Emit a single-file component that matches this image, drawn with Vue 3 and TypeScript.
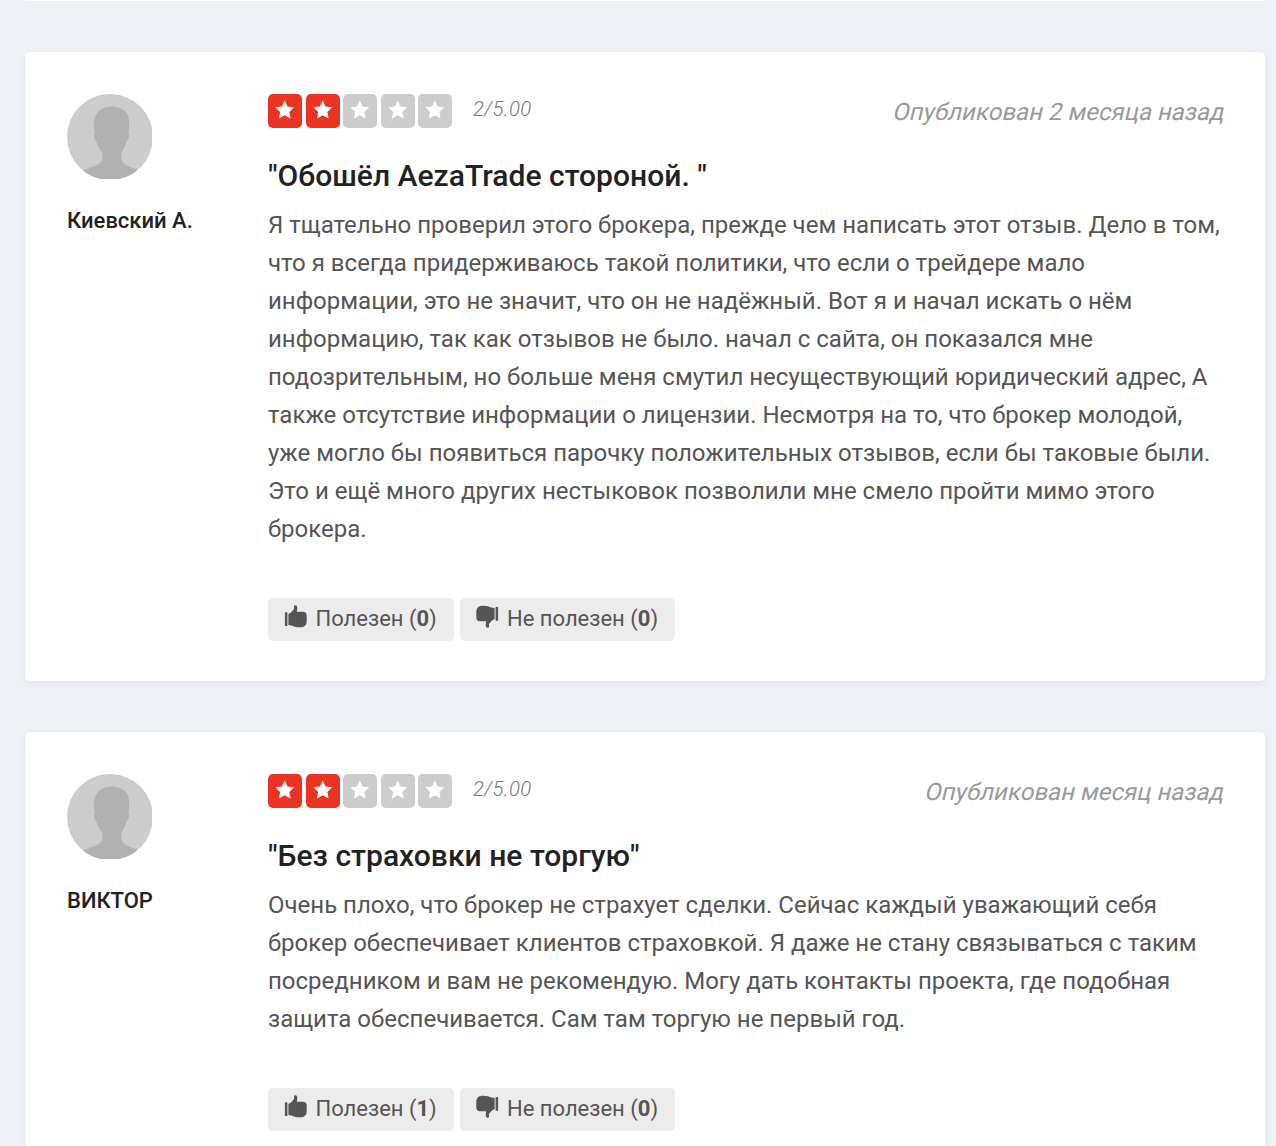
<template>
  <main class="reviews-page">
    <div class="review-card previous"></div>

    <article v-for="review in reviews" :key="review.id" class="review-card">
      <aside class="author">
        <svg class="avatar" viewBox="0 0 85 85" aria-hidden="true">
          <rect width="85" height="85" fill="#cccccc" />
          <path
            fill="#b1b1b1"
            d="M10 80C16 76 22 74 29 71.500c6-2.500 7.500-6 6-13.500-3-3.500-4.700-7-5.500-10-2.200-1.500-3.200-6-1.700-8.500-1.500-7-1.500-14 1.500-19 3-5 8.500-8 15-8 3 0 5.500.500 7 1.500C58 15 61.500 20 62 26c.300 4 0 9-.700 12.500 1.500 3 .500 7-1.700 8.500-1 5-2.500 8-5.100 11.500-1 7 0 10 5.500 13C65 74 72 76 78 80v6H10z"
          />
        </svg>
        <strong class="author-name">{{ review.author }}</strong>
      </aside>

      <div class="review-body">
        <header class="review-header">
          <div class="stars">
            <span v-for="n in 5" :key="n" class="star" :class="{ filled: n <= review.rating }">
              <svg viewBox="0 0 20 20" aria-hidden="true">
                <path d="M10 .400l2.900 6.300 6.700.800-4.900 4.700 1.300 6.900L10 15.700l-6 3.400 1.300-6.900L.400 7.500l6.700-.800z" />
              </svg>
            </span>
          </div>
          <em class="rating">{{ review.rating }}/5.00</em>
          <span class="published">{{ review.published }}</span>
        </header>

        <h4 class="review-title">"{{ review.title }}"</h4>
        <p class="review-text">
          <span v-for="line in review.lines" :key="line">{{ line }}</span>
        </p>

        <div class="votes">
          <button class="vote useful" @click="review.useful++">
            <svg class="thumb" viewBox="0 0 23 23" aria-hidden="true">
              <rect x=".900" y="7.300" width="2.500" height="13.700" rx=".500" />
              <path d="M4.400 9L7 7.600 10 4V1.300C10 .400 11 0 11.800.200c1.300.400 1.700 1.800 1.500 3.200L12.800 6.800h6.100c2.500 0 3.800 1.500 3.800 4v5.400c0 4-2.400 6.100-6.500 6.100-4.600 0-6.600-1-8.600-1.900l-3.200-.300z" />
            </svg>
            <span>Полезен (<b>{{ review.useful }}</b>)</span>
          </button>
          <button class="vote useless" @click="review.useless++">
            <svg class="thumb down" viewBox="0 0 23 23" aria-hidden="true">
              <rect x=".900" y="7.300" width="2.500" height="13.700" rx=".500" />
              <path d="M4.400 9L7 7.600 10 4V1.300C10 .400 11 0 11.800.200c1.300.400 1.700 1.800 1.500 3.200L12.800 6.800h6.100c2.500 0 3.800 1.500 3.800 4v5.400c0 4-2.400 6.100-6.500 6.100-4.600 0-6.600-1-8.600-1.900l-3.200-.300z" />
            </svg>
            <span>Не полезен (<b>{{ review.useless }}</b>)</span>
          </button>
        </div>
      </div>
    </article>
  </main>
</template>

<script setup lang="ts">
import { ref } from "vue";

interface Review {
  id: number;
  author: string;
  rating: number;
  published: string;
  title: string;
  lines: string[];
  useful: number;
  useless: number;
}

const reviews = ref<Review[]>([
  {
    id: 1,
    author: "Киевский А.",
    rating: 2,
    published: "Опубликован 2 месяца назад",
    title: "Обошёл AezaTrade стороной. ",
    lines: [
      "Я тщательно проверил этого брокера, прежде чем написать этот отзыв. Дело в том,",
      "что я всегда придерживаюсь такой политики, что если о трейдере мало",
      "информации, это не значит, что он не надёжный. Вот я и начал искать о нём",
      "информацию, так как отзывов не было. начал с сайта, он показался мне",
      "подозрительным, но больше меня смутил несуществующий юридический адрес, А",
      "также отсутствие информации о лицензии. Несмотря на то, что брокер молодой,",
      "уже могло бы появиться парочку положительных отзывов, если бы таковые были.",
      "Это и ещё много других нестыковок позволили мне смело пройти мимо этого",
      "брокера.",
    ],
    useful: 0,
    useless: 0,
  },
  {
    id: 2,
    author: "ВИКТОР",
    rating: 2,
    published: "Опубликован месяц назад",
    title: "Без страховки не торгую",
    lines: [
      "Очень плохо, что брокер не страхует сделки. Сейчас каждый уважающий себя",
      "брокер обеспечивает клиентов страховкой. Я даже не стану связываться с таким",
      "посредником и вам не рекомендую. Могу дать контакты проекта, где подобная",
      "защита обеспечивается. Сам там торгую не первый год.",
    ],
    useful: 1,
    useless: 0,
  },
]);
</script>

<style>
body {
  margin: 0;
  background: #edf1f7;
  overflow: hidden;
}
</style>

<style scoped>
.reviews-page {
  height: 1146px;
  padding: 0 11px 0 25px;
  box-sizing: border-box;
  overflow: hidden;
  background: #eef2f7;
  font-family: Roboto, "Noto Sans", sans-serif;
  color: #555;
}

.review-card {
  display: flex;
  box-sizing: border-box;
  margin-bottom: 51px;
  padding: 42px 42px 40px;
  background: #fff;
  border-radius: 5px;
  box-shadow: 0 2px 8px rgba(0, 20, 10, 0.06);
}

.review-card.previous {
  height: 1px;
  padding: 0;
  border-radius: 0 0 5px 5px;
}

.author {
  flex: 0 0 201px;
}

.avatar {
  display: block;
  width: 85px;
  height: 85px;
  clip-path: circle(43px at 43px 43px);
}

.author-name {
  display: block;
  margin-top: 25px;
  font-size: 22px;
  font-weight: 500;
  line-height: 34px;
  color: #222;
}

.review-body {
  flex: 1;
  min-width: 0;
}

.review-header {
  display: flex;
  height: 34px;
}

.stars {
  display: flex;
  gap: 3.5px;
}

.star {
  display: flex;
  justify-content: center;
  width: 34px;
  height: 34px;
  border-radius: 5px;
  background: #ccc;
}

.star.filled {
  background: #eb3323;
}

.star svg {
  width: 19.5px;
  height: 19.5px;
  margin-top: 6px;
  fill: #fff;
}

.rating {
  margin-left: 21px;
  font-size: 20.4px;
  font-weight: 300;
  line-height: 31px;
  letter-spacing: 0.35px;
  color: #777;
}

.published {
  margin-left: auto;
  font-size: 24px;
  line-height: 36px;
  color: #999;
  white-space: nowrap;
  transform: skewX(-13deg);
  transform-origin: 100% 26px;
}

.review-title {
  margin: 29px 0 11px;
  font-size: 30.05px;
  font-weight: 500;
  line-height: 38px;
  color: #222;
  white-space: pre;
}

.review-text {
  margin: 0 0 50px;
  font-size: 24px;
  line-height: 38px;
}

.review-text span {
  display: block;
  white-space: nowrap;
}

.votes {
  display: flex;
  gap: 6px;
}

.vote {
  display: flex;
  align-items: center;
  height: 43px;
  padding: 0 16px 2px;
  box-sizing: border-box;
  border: 0;
  border-radius: 5px;
  background: #ececec;
  font-family: inherit;
  font-size: 22px;
  line-height: 40px;
  color: #555;
  white-space: nowrap;
  cursor: pointer;
}

.vote.useful {
  width: 186px;
}

.vote.useless {
  width: 215px;
}

.vote b {
  font-weight: 700;
}

.thumb {
  flex: none;
  width: 23px;
  height: 23px;
  margin: 0 8.5px 4px 0;
  fill: #555;
}

.thumb.down {
  margin-right: 8px;
  transform: rotate(180deg);
}
</style>
